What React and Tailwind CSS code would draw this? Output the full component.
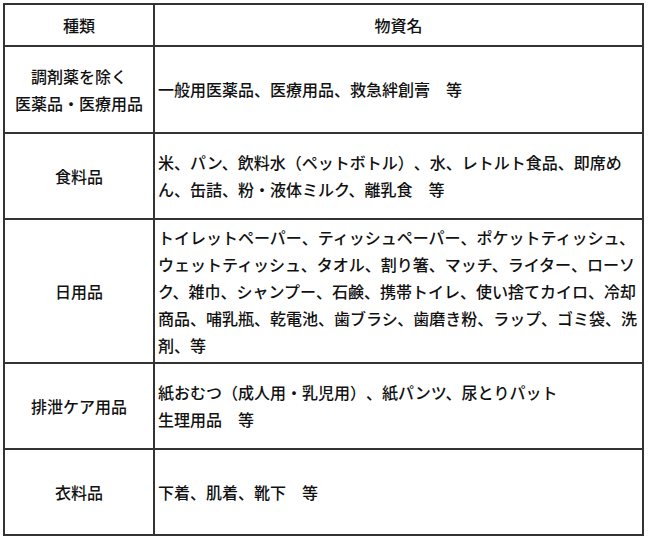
import React from "react";

const rows = [
  { kind: ["調剤薬を除く", "医薬品・医療用品"], items: ["一般用医薬品、医療用品、救急絆創膏　等"], h: "h-[87px]" },
  { kind: ["食料品"], items: ["米、パン、飲料水（ペットボトル）、水、レトルト食品、即席め", "ん、缶詰、粉・液体ミルク、離乳食　等"], h: "h-[86px]" },
  {
    kind: ["日用品"],
    items: [
      "トイレットペーパー、ティッシュペーパー、ポケットティッシュ、",
      "ウェットティッシュ、タオル、割り箸、マッチ、ライター、ローソ",
      "ク、雑巾、シャンプー、石鹸、携帯トイレ、使い捨てカイロ、冷却",
      "商品、哺乳瓶、乾電池、歯ブラシ、歯磨き粉、ラップ、ゴミ袋、洗",
      "剤、等",
    ],
    h: "h-[144px]",
  },
  { kind: ["排泄ケア用品"], items: ["紙おむつ（成人用・乳児用）、紙パンツ、尿とりパット", "生理用品　等"], h: "h-[86px]" },
  { kind: ["衣料品"], items: ["下着、肌着、靴下　等"], h: "h-[86px]" },
];

export default function App() {
  return (
    <div className="w-[650px] h-[540px] bg-white pt-[3px] pl-[3px] text-[16px] leading-[27px] font-medium text-[#111] [text-spacing-trim:space-all] font-['Noto_Sans_CJK_JP','Noto_Sans_CJK_SC',sans-serif]">
      <div className="w-[641px] border-l-2 border-t-2 border-[#333]">
        {/* header */}
        <div className="flex h-[42px]">
          <div className="w-[150px] flex items-center justify-center border-r-2 border-b-2 border-[#333]">種類</div>
          <div className="flex-1 flex items-center justify-center border-r-2 border-b-2 border-[#333]">物資名</div>
        </div>
        {rows.map((r, i) => (
          <div key={i} className={`flex ${r.h}`}>
            <div className="w-[150px] flex flex-col items-center justify-center text-center border-r-2 border-b-2 border-[#333]">
              {r.kind.map((k) => (
                <span key={k}>{k}</span>
              ))}
            </div>
            <div className="flex-1 flex flex-col justify-center pl-[3px] border-r-2 border-b-2 border-[#333]">
              {r.items.map((t) => (
                <span key={t} className="whitespace-nowrap">{t}</span>
              ))}
            </div>
          </div>
        ))}
      </div>
    </div>
  );
}
